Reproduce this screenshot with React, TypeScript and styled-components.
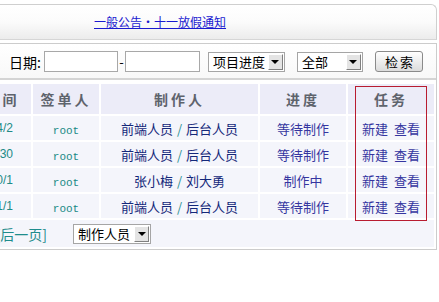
import { FC } from 'react';
import styled, { createGlobalStyle } from 'styled-components';

const GlobalStyle = createGlobalStyle`
  html, body {
    margin: 0;
    padding: 0;
    background: #fff;
    overflow: hidden;
  }
  body {
    width: 439px;
    height: 302px;
    font-family: 'Noto Sans CJK SC', 'DejaVu Sans', sans-serif;
  }
`;

// the screenshot is a crop, so the page starts to the left of the window
const Page = styled.div`
  width: 466px;
  margin-left: -29px;
  padding-top: 4px;
`;

const NoticeBar = styled.div`
  height: 36px;
  box-sizing: border-box;
  border-top: 1px solid #cfcfcf;
  border-right: 1px solid #cfcfcf;
  border-bottom: 1px solid #d6d6d6;
  border-top-right-radius: 6px;
  background: linear-gradient(#ffffff 0%, #fbfbfb 50%, #ececec 100%);
  display: flex;
  align-items: center;
  padding-left: 123px;
`;

const NoticeLink = styled.a`
  color: #1a1ad0;
  font-size: 12px;
  text-decoration: underline;
  line-height: 1;
`;

const MainPanel = styled.div`
  margin-top: 3px;
  border: 1px solid #cccccc;
  background: #fff;
  box-sizing: border-box;
  width: 466px;
`;

const FilterBar = styled.div`
  height: 36px;
  box-sizing: border-box;
  border-bottom: 2px solid #d4d4d4;
  background: linear-gradient(#ffffff, #f8f8f8);
  display: flex;
  align-items: center;
  padding: 1px 0 0 37px;
  font-size: 13px;
  color: #000;
`;

const Label = styled.span`
  margin-right: 3px;
  font-size: 14px;
  line-height: 1;
`;

const TextInput = styled.div<{ w: number }>`
  width: ${({ w }) => w}px;
  height: 21px;
  box-sizing: border-box;
  border: 1px solid #a8a8a8;
  background: #fff;
`;

const Dash = styled.span`
  width: 7px;
  text-align: center;
  line-height: 1;
`;

const Select = styled.div<{ w: number; ml: number }>`
  width: ${({ w }) => w}px;
  margin-left: ${({ ml }) => ml}px;
  height: 20px;
  box-sizing: border-box;
  border: 1px solid #a5a5a5;
  background: #fff;
  display: flex;
  align-items: center;
  padding: 1px;
  font-size: 13px;
  color: #000;
`;

const SelectText = styled.span`
  flex: 1;
  padding-left: 3px;
  white-space: nowrap;
  line-height: 1;
`;

const Arrow = styled.span`
  width: 15px;
  height: 16px;
  box-sizing: border-box;
  background: #e4e4e4;
  border: 1px solid;
  border-color: #fff #808080 #808080 #fff;
  display: flex;
  align-items: center;
  justify-content: center;
  &::after {
    content: '';
    border-left: 4px solid transparent;
    border-right: 4px solid transparent;
    border-top: 4px solid #000;
  }
`;

const SearchButton = styled.button`
  margin-left: 12px;
  width: 48px;
  height: 21px;
  border: 1px solid #8a8a8a;
  border-radius: 3px;
  background: linear-gradient(#ffffff, #dcdcdc);
  font-family: inherit;
  font-size: 13px;
  letter-spacing: 2px;
  padding: 0 0 0 2px;
  line-height: 1;
  color: #000;
`;

const TableWrap = styled.div`
  position: relative;
  margin-top: 2px;
`;

const Grid = styled.table`
  width: 100%;
  table-layout: fixed;
  border-collapse: separate;
  border-spacing: 2px;
`;

const HeadCell = styled.th`
  height: 30px;
  padding: 0;
  background: #ececf8;
  color: #5e636c;
  font-size: 14px;
  font-weight: bold;
  letter-spacing: 3px;
  text-align: center;
`;

const Cell = styled.td`
  height: 24px;
  padding: 0;
  background: #f4f5fb;
  text-align: center;
  font-size: 13px;
  white-space: nowrap;
`;

// right-aligned box so the long date spills out to the left
const DateBox = styled.div`
  display: flex;
  justify-content: flex-end;
  padding-right: 18px;
  font-family: 'Liberation Sans', sans-serif;
  font-size: 12px;
  color: #208a86;
`;

const Signer = styled.span`
  font-family: 'Liberation Mono', monospace;
  font-size: 11px;
  color: #208a86;
`;

const Names = styled.span`
  color: #14287a;
`;

const Slash = styled.span`
  color: #2a9090;
  margin: 0 4px;
`;

const Progress = styled.span`
  color: #3535a0;
`;

const TaskLink = styled.span`
  color: #3535a0;
  & + & {
    margin-left: 6px;
  }
`;

const FooterCell = styled.td`
  height: 27px;
  padding: 0;
  background: #f4f5fb;
`;

const Pager = styled.div`
  display: flex;
  align-items: center;
`;

const PagerLinks = styled.div`
  width: 73px;
  display: flex;
  justify-content: flex-end;
  white-space: nowrap;
  color: #1e8c8c;
  font-size: 14px;
  margin-right: 26px;
`;

const Highlight = styled.div`
  position: absolute;
  left: 383px;
  top: 4px;
  width: 72px;
  height: 135px;
  box-sizing: border-box;
  border: 1px solid #b81c30;
  pointer-events: none;
`;

interface Row {
  date: string;
  signer: string;
  makers: [string, string];
  progress: string;
}

const rows: Row[] = [
  { date: '2011/4/2', signer: 'root', makers: ['前端人员', '后台人员'], progress: '等待制作' },
  { date: '2011/9/30', signer: 'root', makers: ['前端人员', '后台人员'], progress: '等待制作' },
  { date: '2011/10/1', signer: 'root', makers: ['张小梅', '刘大勇'], progress: '制作中' },
  { date: '2011/1/1', signer: 'root', makers: ['前端人员', '后台人员'], progress: '等待制作' },
];

const App: FC = () => (
  <>
    <GlobalStyle />
    <Page>
      <NoticeBar>
        <NoticeLink href="#">一般公告・十一放假通知</NoticeLink>
      </NoticeBar>
      <MainPanel>
        <FilterBar>
          <Label>日期:</Label>
          <TextInput w={74} />
          <Dash>-</Dash>
          <TextInput w={75} />
          <Select w={77} ml={8}>
            <SelectText>项目进度</SelectText>
            <Arrow />
          </Select>
          <Select w={66} ml={12}>
            <SelectText>全部</SelectText>
            <Arrow />
          </Select>
          <SearchButton>检索</SearchButton>
        </FilterBar>
        <TableWrap>
          <Grid>
            <colgroup>
              <col style={{ width: 57 }} />
              <col style={{ width: 66 }} />
              <col style={{ width: 157 }} />
              <col style={{ width: 86 }} />
              <col style={{ width: 86 }} />
            </colgroup>
            <thead>
              <tr>
                <HeadCell>时间</HeadCell>
                <HeadCell>签单人</HeadCell>
                <HeadCell>制作人</HeadCell>
                <HeadCell>进度</HeadCell>
                <HeadCell>任务</HeadCell>
              </tr>
            </thead>
            <tbody>
              {rows.map((r, i) => (
                <tr key={i}>
                  <Cell>
                    <DateBox>{r.date}</DateBox>
                  </Cell>
                  <Cell>
                    <Signer>{r.signer}</Signer>
                  </Cell>
                  <Cell>
                    <Names>{r.makers[0]}</Names>
                    <Slash>/</Slash>
                    <Names>{r.makers[1]}</Names>
                  </Cell>
                  <Cell>
                    <Progress>{r.progress}</Progress>
                  </Cell>
                  <Cell>
                    <TaskLink>新建</TaskLink>
                    <TaskLink>查看</TaskLink>
                  </Cell>
                </tr>
              ))}
              <tr>
                <FooterCell colSpan={5}>
                  <Pager>
                    <PagerLinks>[首页][前一页][后一页]</PagerLinks>
                    <Select w={78} ml={0}>
                      <SelectText>制作人员</SelectText>
                      <Arrow />
                    </Select>
                  </Pager>
                </FooterCell>
              </tr>
            </tbody>
          </Grid>
          <Highlight />
        </TableWrap>
      </MainPanel>
    </Page>
  </>
);

export default App;
